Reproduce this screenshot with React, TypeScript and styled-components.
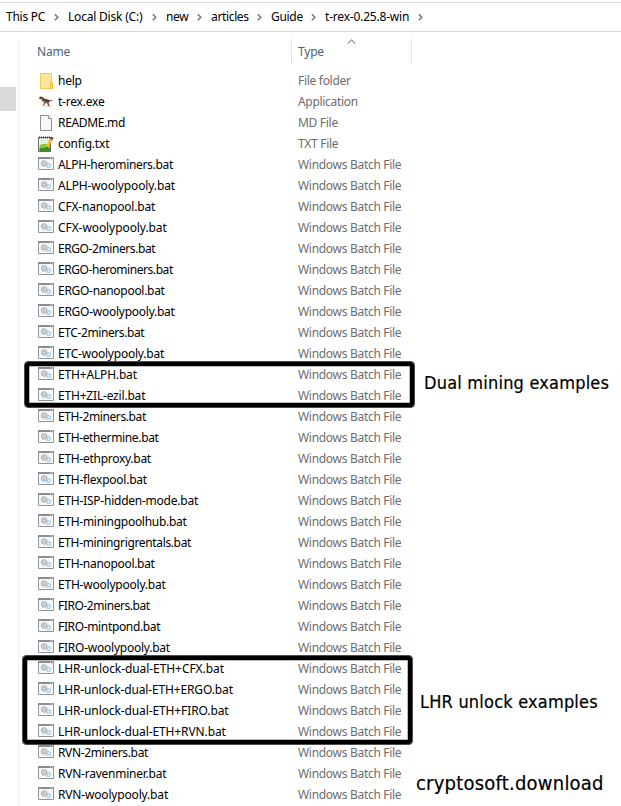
import React from "react";
import styled, { createGlobalStyle } from "styled-components";

const Global = createGlobalStyle`
  *{box-sizing:border-box}
  body{margin:0;background:#fff;overflow:hidden;font-family:"Noto Sans","Open Sans",sans-serif;font-size:12px;color:#000}
  svg{display:block}
`;
const Window = styled.div`
  position: relative;
  width: 621px;
  height: 806px;
  overflow: hidden;
  background: #fff;
`;
const AddressBar = styled.nav`
  display: flex;
  margin-top: 2px;
  height: 30px;
  padding-left: 6px;
  align-items: center;
  border-top: 1px solid #d9d9d9;
  border-bottom: 1px solid #d9d9d9;
`;
const Crumb = styled.div<{ $w: number; $ls: number }>`
  display: flex;
  flex: none;
  justify-content: space-between;
  align-items: center;
  width: ${(p) => p.$w}px;
  padding-right: 9px;
  white-space: nowrap;
  line-height: 16px;
  letter-spacing: ${(p) => p.$ls}px;
`;
const Body = styled.div`
  display: flex;
  padding-top: 7px;
`;
const Sidebar = styled.aside`
  flex: none;
  width: 19px;
  height: 767px;
  padding-top: 48px;
  border-right: 1px solid #f2f2f2;
`;
const Thumb = styled.div`
  width: 16px;
  height: 24px;
  background: #d9d9d9;
`;
const List = styled.main`
  width: 393px;
`;
const Header = styled.div`
  display: flex;
  height: 25px;
  margin-bottom: 6px;
  color: #4c607a;
  line-height: 26px;
`;
const HeadCell = styled.div<{ $w: number; $pad: number }>`
  position: relative;
  width: ${(p) => p.$w}px;
  padding-left: ${(p) => p.$pad}px;
  border-right: 1px solid #e3e3e3;
  letter-spacing: -0.2px;
`;
const SortMark = styled.svg`
  position: absolute;
  left: 55px;
  top: 0;
`;
const Row = styled.div`
  display: flex;
  height: 21px;
  align-items: center;
  padding-left: 19px;
  white-space: nowrap;
  line-height: 21px;
`;
const IconBox = styled.div<{ $lift: number }>`
  flex: none;
  width: 20px;
  padding-bottom: ${(p) => p.$lift}px;
`;
const FileName = styled.div<{ $ls: number }>`
  width: 240px;
  letter-spacing: ${(p) => p.$ls}px;
`;
const FileType = styled.div`
  color: #6d6d6d;
  letter-spacing: -0.3px;
`;
const Frame = styled.div<{ $x: number; $y: number; $w: number; $h: number }>`
  position: absolute;
  left: ${(p) => p.$x}px;
  top: ${(p) => p.$y}px;
  width: ${(p) => p.$w}px;
  height: ${(p) => p.$h}px;
  border: 1px solid #4c4c4c;
  border-radius: 4px;
  box-shadow: inset 0 0 0 4px #000, inset 0 0 0 4.5px #777;
`;
const Note = styled.div<{ $x: number; $y: number; $ls: number; $size: number }>`
  position: absolute;
  left: ${(p) => p.$x}px;
  top: ${(p) => p.$y}px;
  font-family: "DejaVu Sans Condensed", "DejaVu Sans", sans-serif;
  font-stretch: condensed;
  font-size: ${(p) => p.$size}px;
  line-height: 24px;
  white-space: nowrap;
  letter-spacing: ${(p) => p.$ls}px;
  -webkit-text-stroke: 0.2px #000;
`;

const Chevron = () => (
  <svg width="5" height="8" viewBox="0 0 5 8">
    <path d="M.8 1.3 3.8 4.3 .8 7.3" fill="none" stroke="#777" strokeWidth="1.5" />
  </svg>
);
const FolderIcon = () => (
  <svg width="17" height="16" viewBox="0 0 17 16">
    <path d="M2.5.5h11v9h1v6h-12z" fill="#ffe599" stroke="#f0cb58" />
    <path d="M12.5 9.5h2v6h-2z" fill="#ffe28a" stroke="#e8bd3e" />
  </svg>
);
const RexIcon = () => (
  <svg width="17" height="16" viewBox="0 0 17 16">
    <ellipse cx="9" cy="12.6" rx="5" ry=".9" fill="#ebe6e1" />
    <path d="M1.2 3.2 2.5 2.6 5 3 6.5 4.8 9.5 5.2 12 6.2 14.8 5.9 14.8 6.4 11.8 7.5 10.7 9 11.6 12 10 12.2 9.3 9.5 7.5 9 6 11.5 4.7 12 6 8.5 4.8 7 3.4 7.8 4 5.5 1.2 5z" fill="#7b573b" />
    <path d="M2 3.5h2M5 5l4 1.6M7 6l4 1" stroke="#3d2c20" fill="none" />
  </svg>
);
const PageIcon = () => (
  <svg width="17" height="16" viewBox="0 0 17 16">
    <path d="M2.5.5h8l3 3v12h-11z" fill="#f8f8f8" stroke="#8c9194" />
    <path d="M10.5.5v3h3" fill="#fff" stroke="#8c9194" />
  </svg>
);
const TextIcon = () => (
  <svg width="17" height="16" viewBox="0 0 17 16">
    <path d="M.5 1.5h12v14H.5z" fill="#fbfcfa" stroke="#666d68" />
    <path d="M1 1.5h12" stroke="#3d3d3d" strokeWidth="2" strokeDasharray="1 1" />
    <path d="M2 4.5h9M2 6.5h8" stroke="#cfe0c4" />
    <path d="M1.6 9Q6 6.8 12 8.6V15H1.6z" fill="#86c932" />
    <path d="M1.6 12H12v3H1.6z" fill="#3b8d20" />
    <path d="M9 11 13.6 3" stroke="#fbb72b" strokeWidth="2.6" />
    <path d="m13.1 3.4 1.3-2.3" stroke="#9c2e27" strokeWidth="2.8" />
    <path d="m8 12.6.4-2 1.7 1z" fill="#3c2c20" />
  </svg>
);
const BatchIcon = () => (
  <svg width="16" height="13" viewBox="0 0 16 13">
    <path d="M.5.5h15v12H.5z" fill="#f8f8f9" stroke="#90969b" />
    <path d="M0 0h16v2H0z" fill="#878d92" />
    <path d="M12 1h1M14 1h1" stroke="#dfe2e4" />
    <circle cx="6.2" cy="6.5" r="2.7" fill="#e9ebec" stroke="#969a9d" strokeWidth="1.1" strokeDasharray="1.2 .55" />
    <circle cx="6.2" cy="6.5" r="1.1" fill="#fff" stroke="#8f9395" strokeWidth=".7" />
    <circle cx="10.5" cy="8.5" r="1.9" fill="#e0f1fb" stroke="#8fbedb" strokeWidth="1.2" strokeDasharray="1.1 .45" />
  </svg>
);

const crumbs: [string, number, number][] = [
  ["This PC", 62, -0.25],
  ["Local Disk (C:)", 98, -0.2],
  ["new", 45, -0.3],
  ["articles", 60, -0.35],
  ["Guide", 54, -0.3],
  ["t-rex-0.25.8-win", 107, -0.2],
];
const batch: [string, number][] = [
  ["ALPH-herominers", -0.32], ["ALPH-woolypooly", -0.13], ["CFX-nanopool", -0.19], ["CFX-woolypooly", -0.08],
  ["ERGO-2miners", -0.42], ["ERGO-herominers", -0.44], ["ERGO-nanopool", -0.29], ["ERGO-woolypooly", -0.26],
  ["ETC-2miners", -0.4], ["ETC-woolypooly", -0.22], ["ETH+ALPH", -0.17], ["ETH+ZIL-ezil", -0.19],
  ["ETH-2miners", -0.4], ["ETH-ethermine", -0.35], ["ETH-ethproxy", -0.28], ["ETH-flexpool", -0.25],
  ["ETH-ISP-hidden-mode", -0.24], ["ETH-miningpoolhub", -0.29], ["ETH-miningrigrentals", -0.36],
  ["ETH-nanopool", -0.31], ["ETH-woolypooly", -0.22], ["FIRO-2miners", -0.44], ["FIRO-mintpond", -0.35],
  ["FIRO-woolypooly", -0.24], ["LHR-unlock-dual-ETH+CFX", -0.07], ["LHR-unlock-dual-ETH+ERGO", -0.14],
  ["LHR-unlock-dual-ETH+FIRO", -0.11], ["LHR-unlock-dual-ETH+RVN", -0.11], ["RVN-2miners", -0.36],
  ["RVN-ravenminer", -0.24], ["RVN-woolypooly", -0.17],
];
const files: { name: string; type: string; ls: number; lift: number; Icon: React.FC }[] = [
  { name: "help", type: "File folder", ls: -0.25, lift: 0, Icon: FolderIcon },
  { name: "t-rex.exe", type: "Application", ls: -0.22, lift: 0, Icon: RexIcon },
  { name: "README.md", type: "MD File", ls: -0.33, lift: 0, Icon: PageIcon },
  { name: "config.txt", type: "TXT File", ls: -0.2, lift: 0, Icon: TextIcon },
  ...batch.map(([name, ls]) => ({ name: name + ".bat", type: "Windows Batch File", ls, lift: 2, Icon: BatchIcon })),
];

export default function App() {
  return (
    <Window>
      <Global />
      <AddressBar>
        {crumbs.map(([label, w, ls]) => (
          <Crumb key={label} $w={w} $ls={ls}>{label}<Chevron /></Crumb>
        ))}
      </AddressBar>
      <Body>
        <Sidebar><Thumb /></Sidebar>
        <List>
          <Header>
            <HeadCell $w={273} $pad={18}>Name</HeadCell>
            <HeadCell $w={120} $pad={6}>
              Type
              <SortMark width="9" height="6" viewBox="0 0 9 6">
                <path d="M.7 4.7 4.5 1 8.3 4.7" fill="none" stroke="#555" />
              </SortMark>
            </HeadCell>
          </Header>
          {files.map(({ name, type, ls, lift, Icon }) => (
            <Row key={name}>
              <IconBox $lift={lift}><Icon /></IconBox>
              <FileName $ls={ls}>{name}</FileName>
              <FileType>{type}</FileType>
            </Row>
          ))}
        </List>
      </Body>
      <Frame $x={24} $y={361} $w={391} $h={47} />
      <Frame $x={22} $y={655} $w={391} $h={90} />
      <Note $x={424} $y={371} $ls={0.2} $size={18}>Dual mining examples</Note>
      <Note $x={420} $y={690} $ls={0.2} $size={18}>LHR unlock examples</Note>
      <Note $x={416} $y={771} $ls={0.22} $size={20}>cryptosoft.download</Note>
    </Window>
  );
}
